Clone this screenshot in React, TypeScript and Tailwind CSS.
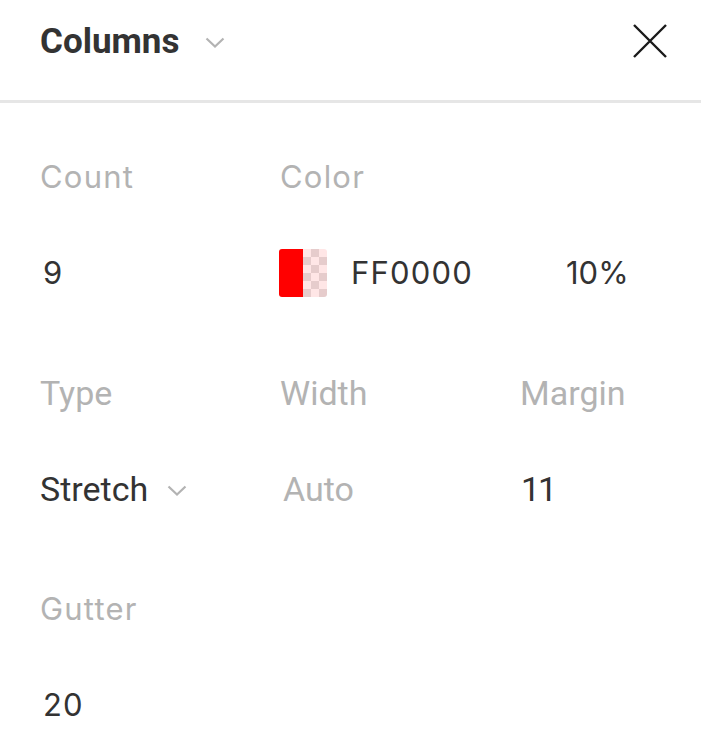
import React from "react";

function Chevron({ className }: { className?: string }) {
  return (
    <svg className={className} viewBox="0 0 20 11" fill="none">
      <path d="M1.5 1.5 L10 9.5 L18.5 1.5" stroke="#b3b3b3" strokeWidth="2.2" />
    </svg>
  );
}

function Swatch() {
  const cells = [];
  for (let r = 0; r < 6; r++) {
    for (let c = 0; c < 3; c++) {
      const dark = (r + c) % 2 === 1;
      cells.push(
        <rect key={`${r}-${c}`} x={24 + c * 8} y={r * 8} width="8" height="8" fill={dark ? "#e6cccc" : "#ffe6e6"} />
      );
    }
  }
  return (
    <svg width="48" height="48" viewBox="0 0 48 48" className="shrink-0">
      <defs>
        <clipPath id="sw">
          <rect x="0" y="0" width="48" height="48" rx="3" />
        </clipPath>
      </defs>
      <g clipPath="url(#sw)">
        {cells}
        <rect x="0" y="0" width="24" height="48" fill="#ff0000" />
      </g>
    </svg>
  );
}

export default function App() {
  return (
    <div className="w-[701px] h-[750px] bg-white overflow-hidden">
      <div className="h-[103px] flex items-center justify-between pl-[40px] pr-[34px] pb-[18px] border-b-[3px] border-[#e6e6e6]">
        <div className="flex items-center">
          <span className="font-['Roboto',sans-serif] text-[35px] font-bold text-[#333333] leading-none">Columns</span>
          <Chevron className="w-[20px] h-[11px] ml-[26px] mt-[2px]" />
        </div>
        <svg width="34" height="34" viewBox="0 0 34 34" fill="none">
          <path d="M1 1 L33 33 M33 1 L1 33" stroke="#1a1a1a" strokeWidth="2.4" />
        </svg>
      </div>

      <div className="pl-[40px] pt-[26px] flex flex-col gap-[24px]">
        <div className="grid grid-cols-[240px_240px_240px] grid-rows-[96px_96px] font-['Inter',sans-serif] text-[31px]">
          <div className="flex items-center tracking-[1.2px] text-[#b3b3b3]">Count</div>
          <div className="col-span-2 flex items-center tracking-[1.2px] text-[#b3b3b3]">Color</div>
          <div className="flex items-center pl-[3px] text-[#333333]">9</div>
          <div className="col-span-2 flex items-center -ml-[1px]">
            <Swatch />
            <span className="ml-[24px] w-[215px] tracking-[1.2px] text-[#333333]">FF0000</span>
            <span className="text-[#333333]">10%</span>
          </div>
        </div>

        <div className="grid grid-cols-[240px_240px_240px] grid-rows-[96px_96px] font-['Roboto',sans-serif] text-[34px]">
          <div className="flex items-center text-[#b3b3b3]">Type</div>
          <div className="flex items-center text-[#b3b3b3]">Width</div>
          <div className="flex items-center text-[#b3b3b3]">Margin</div>
          <div className="flex items-center">
            <span className="text-[#333333]">Stretch</span>
            <Chevron className="w-[20px] h-[11px] ml-[19px] mt-[2px]" />
          </div>
          <div className="flex items-center pl-[3px] text-[#b3b3b3]">Auto</div>
          <div className="flex items-center pl-[1px] tracking-[-2px] text-[#333333]">11</div>
        </div>

        <div className="grid grid-cols-[240px_240px_240px] grid-rows-[96px_96px] font-['Inter',sans-serif] text-[31px]">
          <div className="flex items-center tracking-[1.2px] text-[#b3b3b3]">Gutter</div>
          <div />
          <div />
          <div className="flex items-center pl-[3px] tracking-[1px] text-[#333333]">20</div>
        </div>
      </div>
    </div>
  );
}
